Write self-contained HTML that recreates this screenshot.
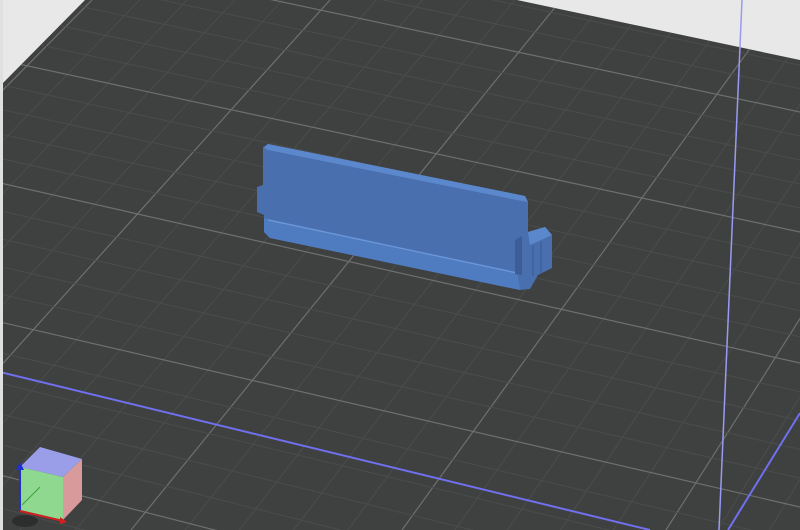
<!DOCTYPE html>
<html><head><meta charset="utf-8"><style>
html,body{margin:0;padding:0;background:#e8e8e8;overflow:hidden;width:800px;height:530px}
svg{display:block}
</style></head><body>
<svg id="s" width="800" height="530" viewBox="0 0 800 530" xmlns="http://www.w3.org/2000/svg">
<defs><clipPath id="pc"><polygon points="3,83 85,0 517,0 800,60 800,530 3,530"/></clipPath></defs>
<rect width="800" height="530" fill="#e8e8e8"/>
<polygon points="3,83 85,0 517,0 800,60 800,530 3,530" fill="#3f4040"/>
<g id="grid" clip-path="url(#pc)"></g>
<g clip-path="url(#pc)">
<line x1="0" y1="372" x2="650" y2="530" stroke="#7070f0" stroke-width="2"/>
<line x1="800" y1="413" x2="728" y2="530" stroke="#7070f0" stroke-width="2"/>
</g>
<line x1="742" y1="0" x2="719" y2="530" stroke="#9a9af5" stroke-width="1.5"/>
<!-- object -->
<polygon points="263,147 268,144 525,196 528,202 528,232 545,227 552,235 552,268 538,275 530,289 520,290 270,238 264,232 264,215 257,212 257,187 263,185" fill="#4a6fae"/>
<polygon points="264,148 268,144 525,196 528,202 522,201 268,150" fill="#5b88cc"/>
<polygon points="264,218 517,272 520,290 270,238 264,232" fill="#4f7cc0"/>
<line x1="268" y1="220" x2="517" y2="273" stroke="#6d98d8" stroke-width="1.2"/>
<polygon points="515,240 522,236 522,275 515,274" fill="#3c5d96"/>
<polygon points="528,232 545,227 552,235 530,245" fill="#5b88cc"/>
<line x1="533" y1="245" x2="533" y2="276" stroke="#3c5d96" stroke-width="1.2"/>
<line x1="541" y1="242" x2="541" y2="273" stroke="#3c5d96" stroke-width="1.2"/>
<!-- gizmo -->
<ellipse cx="25" cy="521" rx="13" ry="6" fill="#2c2d2d"/>
<polygon points="20,467 40,447 82,459 63,477" fill="#9a9ee8"/>
<polygon points="20,467 63,477 63,520 20,510" fill="#8fd88f"/>
<polygon points="63,477 82,459 82,500 63,520" fill="#d89a9a"/>
<line x1="22" y1="505" x2="40" y2="487" stroke="#3aa03a" stroke-width="1"/>
<line x1="20" y1="511" x2="20" y2="468" stroke="#2030d0" stroke-width="2"/>
<polygon points="16,470 24,470 20,462" fill="#2030d0"/>
<line x1="20" y1="511" x2="63" y2="521" stroke="#d02020" stroke-width="2"/>
<polygon points="60,517 67,522 60,524" fill="#d02020"/>
<rect x="0" y="0" width="3" height="530" fill="#e0e0e0"/>
</svg>
<script>
(function(){
var g=document.getElementById('grid'),NS='http://www.w3.org/2000/svg';
var ct=[-150,92,330,561,785,1002,1212],cb=[-720,-432,-147,131,402,666,925];
var rl=[-175,-58,60,183,322,475,640],rr=[-5,112,232,363,507,680,870];
function ln(x1,y1,x2,y2,c,w){var l=document.createElementNS(NS,'line');l.setAttribute('x1',x1);l.setAttribute('y1',y1);l.setAttribute('x2',x2);l.setAttribute('y2',y2);l.setAttribute('stroke',c);l.setAttribute('stroke-width',w);g.appendChild(l);}
var N=5;
for(var i=0;i<ct.length-1;i++){for(var k=0;k<N;k++){var f=k/N;
ln(ct[i]+(ct[i+1]-ct[i])*f,0,cb[i]+(cb[i+1]-cb[i])*f,530,k?'#4b4c4c':'#6e6f6f',k?1:1.2);}}
for(var i=0;i<rl.length-1;i++){for(var k=0;k<N;k++){var f=k/N;
ln(0,rl[i]+(rl[i+1]-rl[i])*f,800,rr[i]+(rr[i+1]-rr[i])*f,k?'#4b4c4c':'#6e6f6f',k?1:1.2);}}
})();
</script>
</body></html>
